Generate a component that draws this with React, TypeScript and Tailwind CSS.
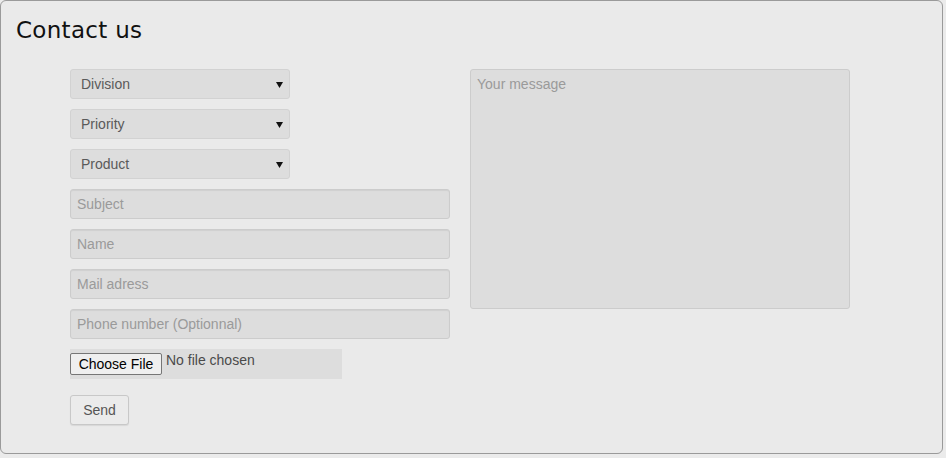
import React from "react";

function Select({ label }: { label: string }) {
  return (
    <div className="flex h-[30px] w-[220px] items-center justify-between rounded-[3px] border border-[#d2d2d2] bg-[#dddddd] pl-[10px] pr-[6px] text-[14px] text-[#5a5a5a]">
      <span>{label}</span>
      <svg width="7" height="7" viewBox="0 0 7 7"><polygon points="0,1 7,1 3.5,7" fill="#111" /></svg>
    </div>
  );
}

function Input({ ph }: { ph: string }) {
  return (
    <div className="flex h-[30px] w-[380px] items-center rounded-[3px] border border-[#cccccc] bg-[#dddddd] px-[6px] text-[14px] text-[#9a9a9a] shadow-[inset_0_1px_1px_rgba(0,0,0,0.06)]">
      {ph}
    </div>
  );
}

export default function App() {
  return (
    <div className="h-[458px] w-[946px] bg-[#ebebeb]" style={{ fontFamily: '"Liberation Sans", Arial, sans-serif' }}>
      <div className="h-[454px] w-[943px] rounded-[6px] border border-[#9a9a9a] bg-[#eaeaea]">
        <h1 className="pl-[15px] pt-[14px] text-[23px] leading-[30px] text-[#111]" style={{ fontFamily: '"DejaVu Sans", sans-serif', letterSpacing: "0.3px" }}>
          Contact us
        </h1>
        <div className="mt-[24px] flex gap-[20px] pl-[69px]">
          <div className="flex flex-col gap-[10px]">
            <Select label="Division" />
            <Select label="Priority" />
            <Select label="Product" />
            <Input ph="Subject" />
            <Input ph="Name" />
            <Input ph="Mail adress" />
            <Input ph="Phone number (Optionnal)" />
            <div className="flex h-[30px] w-[272px] items-start bg-[#dddddd] pt-[4px]">
              <div className="flex h-[22px] w-[92px] items-center justify-center rounded-[2px] border border-[#767676] bg-[#efefef] text-[14px] text-black">
                Choose File
              </div>
              <span className="ml-[4px] -mt-[3px] text-[14px] text-[#4a4a4a]">No file chosen</span>
            </div>
            <div className="mt-[6px] flex h-[30px] w-[59px] items-center justify-center rounded-[3px] border border-[#c8c8c8] bg-[#ebebeb] text-[14px] text-[#555] shadow-[0_1px_1px_rgba(0,0,0,0.08)]">
              Send
            </div>
          </div>
          <div className="h-[240px] w-[380px] rounded-[3px] border border-[#cccccc] bg-[#dddddd] px-[6px] pt-[4px] text-[14px] text-[#9a9a9a]">
            Your message
          </div>
        </div>
      </div>
    </div>
  );
}
